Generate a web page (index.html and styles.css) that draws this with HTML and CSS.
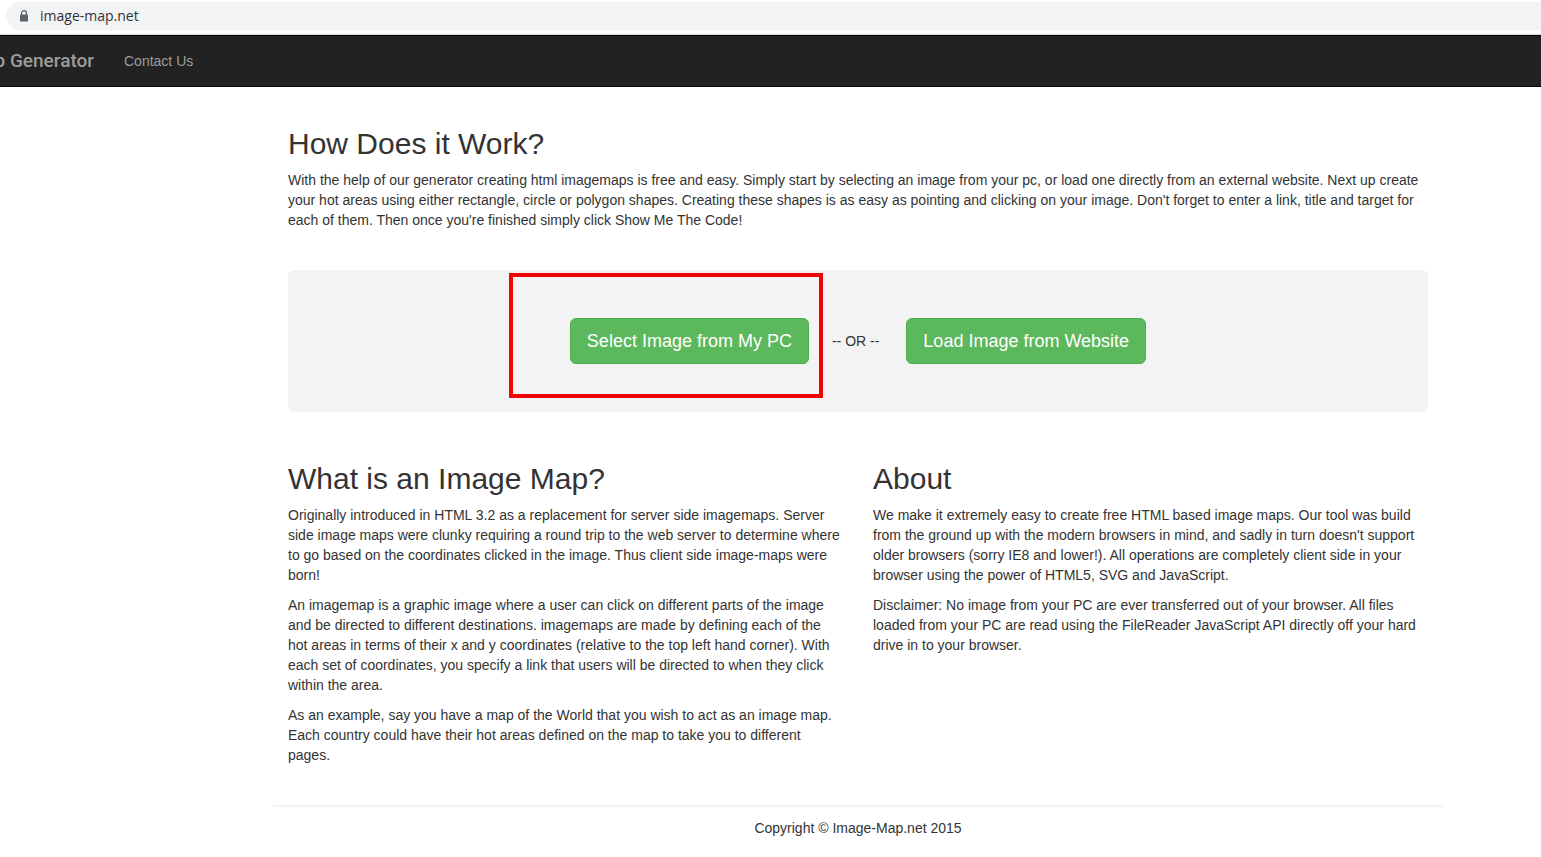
FILE: index.html
```html
<!DOCTYPE html>
<html lang="en">
<head>
<meta charset="utf-8">
<title>Image Map Generator</title>
<link rel="stylesheet" href="styles.css">
</head>
<body>
<div class="browser-bar">
  <label class="address">
    <svg class="lock" viewBox="0 0 10 12" width="10" height="12" aria-hidden="true"><path d="M2.5 5.5V3.2a2.5 2.5 0 0 1 5 0v2.3" fill="none" stroke="#5f6368" stroke-width="1.3"/><rect x="1" y="4.5" width="8" height="7" rx="1" fill="#5f6368"/></svg>
    <input class="url" type="text" value="image-map.net" aria-label="Address" spellcheck="false">
  </label>
</div>
<nav class="navbar">
  <a class="brand" href="#">p Generator</a>
  <a class="nav-link" href="#">Contact Us</a>
</nav>
<div class="page">
  <div class="container">
    <main class="content">
      <section class="section">
        <h2>How Does it Work?</h2>
        <p>With the help of our generator creating html imagemaps is free and easy. Simply start by selecting an image from your pc, or load one directly from an external website. Next up create your hot areas using either rectangle, circle or polygon shapes. Creating these shapes is as easy as pointing and clicking on your image. Don't forget to enter a link, title and target for each of them. Then once you're finished simply click Show Me The Code!</p>
      </section>
      <div class="well">
        <div class="marked"><button class="btn" type="button">Select Image from My PC</button></div>
        <span class="or">-- OR --</span>
        <button class="btn" type="button">Load Image from Website</button>
      </div>
      <div class="columns">
        <section class="section">
          <h2>What is an Image Map?</h2>
          <p>Originally introduced in HTML 3.2 as a replacement for server side imagemaps. Server side image maps were clunky requiring a round trip to the web server to determine where to go based on the coordinates clicked in the image. Thus client side image-maps were born!</p>
          <p>An imagemap is a graphic image where a user can click on different parts of the image and be directed to different destinations. imagemaps are made by defining each of the hot areas in terms of their x and y coordinates (relative to the top left hand corner). With each set of coordinates, you specify a link that users will be directed to when they click within the area.</p>
          <p>As an example, say you have a map of the World that you wish to act as an image map. Each country could have their hot areas defined on the map to take you to different pages.</p>
        </section>
        <section class="section">
          <h2>About</h2>
          <p>We make it extremely easy to create free HTML based image maps. Our tool was build from the ground up with the modern browsers in mind, and sadly in turn doesn't support older browsers (sorry IE8 and lower!). All operations are completely client side in your browser using the power of HTML5, SVG and JavaScript.</p>
          <p>Disclaimer: No image from your PC are ever transferred out of your browser. All files loaded from your PC are read using the FileReader JavaScript API directly off your hard drive in to your browser.</p>
        </section>
      </div>
    </main>
    <footer class="footer">Copyright © Image-Map.net 2015</footer>
  </div>
</div>
</body>
</html>
```
FILE: styles.css
```css
* { box-sizing: border-box; }

body {
  margin: 0;
  background: #fff;
  color: #333;
  font: 14px/20px "Liberation Sans", Arial, sans-serif;
}

.browser-bar {
  padding: 2px 0 4px 6px;
  border-bottom: 1px solid #dadce0;
}

.address {
  display: flex;
  align-items: center;
  gap: 11px;
  height: 28px;
  padding-left: 13px;
  background: #f1f3f4;
  border-radius: 14px 0 0 14px;
}

.url {
  flex: 1;
  padding: 0;
  border: 0;
  outline: 0;
  background: none;
  color: #303237;
  font: 14px/20px "Open Sans", sans-serif;
}

.navbar {
  display: flex;
  align-items: center;
  gap: 30px;
  height: 52px;
  background: #222;
  border: solid #080808;
  border-width: 1px 0;
  overflow: hidden;
}

.navbar a {
  color: #9d9d9d;
  text-decoration: none;
}

.navbar .brand {
  display: flex;
  justify-content: flex-end;
  width: 94px;
  font: 500 19px/20px Roboto, sans-serif;
  white-space: nowrap;
}

.page { padding-left: 175px; }

.container {
  max-width: 1170px;
  margin: 0 auto;
}

.content { padding: 40px 15px; }

h2 {
  margin: 0 0 10px;
  font-size: 30px;
  line-height: 33px;
  font-weight: 500;
}

p { margin: 0 0 10px; }

.section p:last-child { margin-bottom: 0; }

.well {
  display: flex;
  align-items: center;
  justify-content: center;
  margin: 40px 0 50px;
  padding: 48px;
  background: #f3f3f3;
  border-radius: 6px;
}

.marked {
  position: relative;
  display: flex;
}

.marked::after {
  content: "";
  position: absolute;
  inset: -45px -14px -34px -61px;
  border: 4px solid #ee0606;
  pointer-events: none;
}

.btn {
  padding: 10px 16px;
  background: #5cb85c;
  border: 1px solid #4cae4c;
  border-radius: 6px;
  color: #fff;
  font: 18px/24px "Liberation Sans", Arial, sans-serif;
  white-space: nowrap;
}

.or { padding: 0 27px 0 23px; }

.columns {
  display: grid;
  grid-template-columns: 1fr 1fr;
  gap: 30px;
}

.footer {
  padding: 11px 0 19px;
  border-top: 2px solid #f3f3f3;
  text-align: center;
}
```
